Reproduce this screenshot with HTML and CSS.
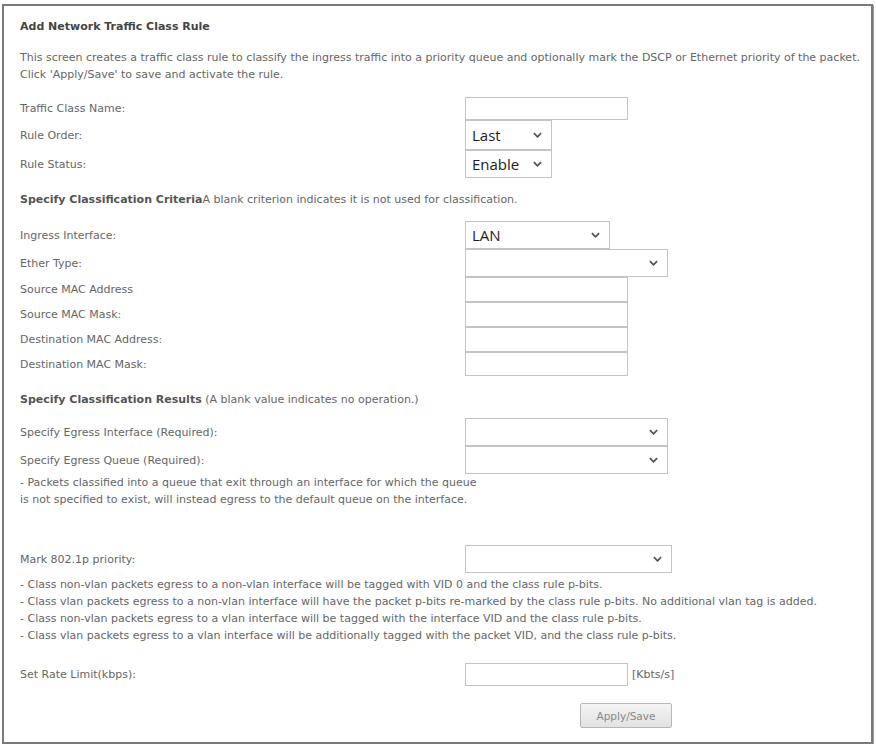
FILE: index.html
```html
<!DOCTYPE html>
<html lang="en">
<head>
    <meta charset="UTF-8">
    <title>Add Network Traffic Class Rule</title>
    <link rel="stylesheet" href="styles.css">
</head>
<body>
    <div class="frame">
        <h3 class="title">Add Network Traffic Class Rule</h3>
        <p class="desc">This screen creates a traffic class rule to classify the ingress traffic into a priority queue and optionally mark the DSCP or Ethernet priority of the packet.<br>Click 'Apply/Save' to save and activate the rule.</p>

        <div class="rows first">
            <div class="row h23"><span>Traffic Class Name:</span><div class="txt"></div></div>
            <div class="row h30"><span>Rule Order:</span><div class="sel w86"><span>Last</span><svg viewBox="0 0 10 6"><path d="M1 1l4 4 4-4"/></svg></div></div>
            <div class="row h28"><span>Rule Status:</span><div class="sel w86"><span>Enable</span><svg viewBox="0 0 10 6"><path d="M1 1l4 4 4-4"/></svg></div></div>
        </div>

        <p class="section crit-head"><b>Specify Classification Criteria</b>A blank criterion indicates it is not used for classification.</p>

        <div class="rows crit">
            <div class="row h28"><span>Ingress Interface:</span><div class="sel w145"><span>LAN</span><svg viewBox="0 0 10 6"><path d="M1 1l4 4 4-4"/></svg></div></div>
            <div class="row h28"><span>Ether Type:</span><div class="sel w203"><span></span><svg viewBox="0 0 10 6"><path d="M1 1l4 4 4-4"/></svg></div></div>
            <div class="row h25"><span>Source MAC Address</span><div class="txt"></div></div>
            <div class="row h25"><span>Source MAC Mask:</span><div class="txt"></div></div>
            <div class="row h25"><span>Destination MAC Address:</span><div class="txt"></div></div>
            <div class="row h24"><span>Destination MAC Mask:</span><div class="txt"></div></div>
        </div>

        <p class="section res-head"><b>Specify Classification Results</b> (A blank value indicates no operation.)</p>

        <div class="rows res">
            <div class="row h28"><span>Specify Egress Interface (Required):</span><div class="sel w203"><span></span><svg viewBox="0 0 10 6"><path d="M1 1l4 4 4-4"/></svg></div></div>
            <div class="row h28"><span>Specify Egress Queue (Required):</span><div class="sel w203"><span></span><svg viewBox="0 0 10 6"><path d="M1 1l4 4 4-4"/></svg></div></div>
        </div>
        <p class="note">- Packets classified into a queue that exit through an interface for which the queue<br>is not specified to exist, will instead egress to the default queue on the interface.</p>

        <div class="rows mark">
            <div class="row h28"><span>Mark 802.1p priority:</span><div class="sel w207"><span></span><svg viewBox="0 0 10 6"><path d="M1 1l4 4 4-4"/></svg></div></div>
        </div>
        <p class="note bullets">- Class non-vlan packets egress to a non-vlan interface will be tagged with VID 0 and the class rule p-bits.<br>- Class vlan packets egress to a non-vlan interface will have the packet p-bits re-marked by the class rule p-bits. No additional vlan tag is added.<br>- Class non-vlan packets egress to a vlan interface will be tagged with the interface VID and the class rule p-bits.<br>- Class vlan packets egress to a vlan interface will be additionally tagged with the packet VID, and the class rule p-bits.</p>

        <div class="rows rate">
            <div class="row h23"><span>Set Rate Limit(kbps):</span><div class="field"><div class="txt"></div><span class="unit">[Kbts/s]</span></div></div>
        </div>

        <div class="actions"><button class="btn">Apply/Save</button></div>
    </div>
</body>
</html>
```

FILE: styles.css
```css
body {
    margin: 0;
    background: #fff;
    font-family: 'DejaVu Sans', sans-serif;
    font-size: 11px;
    color: #666;
}
.frame {
    margin: 4px 3px 0 2px;
    height: 740px;
    box-sizing: border-box;
    border: 2px solid #7a7a7a;
    box-shadow: 1px 1px 0 #9a9a9a;
    padding: 0 0 0 16px;
}
.title {
    margin: 13px 0 0 0;
    font-size: 11px;
    font-weight: bold;
    color: #444;
    line-height: 16px;
}
.desc {
    margin: 14px 0 0 0;
    line-height: 17px;
}
.rows.first { margin-top: 14px; }
.row {
    display: grid;
    grid-template-columns: 445px auto;
    align-items: center;
}
.h23 { height: 23px; }
.h24 { height: 24px; }
.h25 { height: 25px; }
.h28 { height: 28px; }
.h30 { height: 30px; }
.txt {
    width: 163px;
    height: 23px;
    box-sizing: border-box;
    border: 1px solid #c4c4c4;
    background: #fff;
}
.row.h25 .txt, .row.h24 .txt { height: 100%; }
.sel {
    height: 100%;
    box-sizing: border-box;
    border: 1px solid #c4c4c4;
    display: flex;
    align-items: center;
    justify-content: space-between;
    padding: 0 9px 0 6px;
    font-family: 'Open Sans', sans-serif;
    font-size: 15px;
    color: #222;
}
.sel svg {
    width: 9px;
    height: 6px;
    fill: none;
    stroke: #555;
    stroke-width: 2;
}
.w86 { width: 87px; }
.w145 { width: 145px; }
.w203 { width: 203px; }
.w207 { width: 207px; }
.section {
    margin: 0;
    line-height: 14px;
}
.section b {
    color: #555;
}
.crit-head { margin-top: 15px; }
.rows.crit { margin-top: 14px; }
.res-head { margin-top: 17px; }
.rows.res { margin-top: 11px; }
.note {
    margin: 0;
    line-height: 17px;
}
.rows.mark { margin-top: 37px; }
.bullets { margin-top: 3px; }
.rows.rate { margin-top: 19px; }
.field {
    display: flex;
    align-items: center;
    gap: 4px;
}
.actions {
    margin-top: 17px;
    padding-left: 560px;
}
.btn {
    width: 92px;
    height: 25px;
    font-family: 'DejaVu Sans', sans-serif;
    font-size: 10.5px;
    color: #888;
    background: linear-gradient(#f4f4f4, #e2e2e2);
    border: 1px solid #b8b8b8;
    border-radius: 2px;
}
```
